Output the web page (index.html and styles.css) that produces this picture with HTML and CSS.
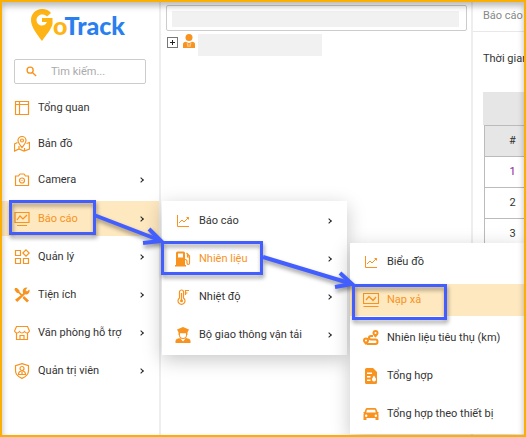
FILE: index.html
```
<!DOCTYPE html>
<html lang="vi">
<head>
<meta charset="utf-8">
<title>GoTrack</title>
<link rel="stylesheet" href="styles.css">
</head>
<body>
<div class="app">
  <aside class="sidebar">
    <a class="logo" href="#" aria-label="GoTrack">
      <svg class="logo-pin" viewBox="0 0 22 32" aria-hidden="true"><path fill="#fdb414" d="M11 0C4.500 0 0 5 0 11c0 7 6 14 11 21 4-6 9-11 10.500-17V9H11v4h5c-1 2.500-3 3.500-5 3.500-3.500 0-5.500-2.600-5.500-5.500s2.500-5.500 5.500-5.500c2 0 3.500.5 5 2l4-3.500C18 1.500 15 0 11 0z"/></svg>
      <span class="logo-text"><span class="logo-o">o</span>Track</span>
    </a>
    <label class="search">
      <svg class="search-icon" viewBox="0 0 12 12" aria-hidden="true"><circle cx="4.500" cy="4.500" r="3.300"/><path d="M7 7l4 4"/></svg>
      <input type="search" placeholder="Tìm kiếm..." aria-label="Tìm kiếm">
    </label>
    <nav>
      <ul class="menu pages">
        <li><a class="item" href="#"><svg class="icon" viewBox="0 0 16 16"><path d="M1.500 1.500h13v13h-13zM1.500 4.500h13M5.500 1.500v13"/></svg>Tổng quan</a></li>
        <li><a class="item" href="#"><svg class="icon" viewBox="0 0 16 16"><path d="M8 11.500C5.500 8.500 4 6.500 4 4.500a4 4 0 0 1 8 0c0 2-1.500 4-4 7zM3.500 6.500L.5 8v7l4.500-2 5 2 5.500-2V6.500l-3 1M5 10v3M10.500 12v3"/><circle cx="8" cy="4.500" r="1.500"/></svg>Bản đồ</a></li>
        <li><a class="item" href="#"><svg class="icon" viewBox="0 0 16 16"><path d="M1.500 4h3l1.500-2h4l1.500 2h3v9.500h-13z"/><circle cx="8" cy="8.500" r="2.500"/><path d="M7.500 8.500h1"/></svg>Camera<span class="chevron"></span></a></li>
      </ul>
      <ul class="menu groups">
        <li>
          <a class="item active" href="#"><svg class="icon" viewBox="0 0 16 16"><path d="M1 1.500h14v10H1zM3 9l3-4 3 3 4-4M3 14.500h10"/></svg>Báo cáo<span class="chevron"></span></a>
          <ul class="submenu reports">
            <li><a class="item" href="#"><svg class="icon thin" viewBox="0 0 16 16"><path d="M2.500 2v11.500H14M4 10l3-3 2 2 4.500-4.500M11.500 4.500h2v2"/></svg>Báo cáo<span class="chevron"></span></a></li>
            <li>
              <a class="item current" href="#"><svg class="icon" viewBox="0 0 16 16"><path class="solid" fill-rule="evenodd" d="M1 14V2Q1 .5 2.500.5h6Q10 .5 10 2v12h1v1.500H0V14zM3 2.500v4h5v-4z"/><path d="M10 8.500q2 0 2 2v1.500q0 1.500 1.200 1.500T14.500 12V5L11.500 2M12.500 3v3h2"/></svg>Nhiên liệu<span class="chevron"></span></a>
              <ul class="submenu fuel">
                <li><a class="item" href="#"><svg class="icon thin" viewBox="0 0 16 16"><path d="M2.500 2v11.500H14M4 10l3-3 2 2 4.500-4.500M11.500 4.500h2v2"/></svg>Biểu đồ</a></li>
                <li><a class="item active" href="#"><svg class="icon" viewBox="0 0 16 16"><path d="M.5 1.500h15v10H.5zM3 8l3-3.500 4 4 3-3.500M.5 14.500h15"/></svg>Nạp xả</a></li>
                <li><a class="item" href="#"><svg class="icon" viewBox="0 0 16 16"><path class="solid" fill-rule="evenodd" d="M12.500 0a3 3 0 0 1 3 3c0 1.500-1.500 3-3 4.500C11 6 9.500 4.500 9.500 3a3 3 0 0 1 3-3zm0 2a1 1 0 1 0 0 2 1 1 0 0 0 0-2zM3 7.500a3 3 0 0 1 3 3c0 1.500-1.500 3-3 4.500C1.500 13.500 0 12 0 10.500a3 3 0 0 1 3-3zm0 2a1 1 0 1 0 0 2 1 1 0 0 0 0-2z"/><path class="road" d="M10 6H8q-2 0-2 1.700T8 9.500h4.500q2 0 2 2.200t-2 2.300H4"/></svg>Nhiên liệu tiêu thụ (km)</a></li>
                <li><a class="item" href="#"><svg class="icon" viewBox="0 0 16 16"><path class="solid" fill-rule="evenodd" d="M3.500 0H10l4 4v10.500q0 1.500-1.500 1.500h-9Q2 16 2 14.500v-13Q2 0 3.500 0zM4 4.500V6h5V4.500zM4 8v1.500h3.500V8zM4 11.500V13h3.500v-1.500zM11 7.500c-1.300 2-2 3-2 4a2 2 0 0 0 4 0c0-1-.7-2-2-4z"/></svg>Tổng hợp</a></li>
                <li><a class="item" href="#"><svg class="icon" viewBox="0 0 16 16"><path class="solid" fill-rule="evenodd" d="M4 2h8q1 0 1.400 1L14.500 6h1v1.500h-.5l.5 1V14h-3v-2h-9v2h-3V8.500l.5-1H.5V6h1L2.600 3Q3 2 4 2zM4 3.700L3.200 6.500h9.600L12 3.700zM3.200 8.500a1.200 1.200 0 1 0 0 2.400 1.200 1.200 0 0 0 0-2.400zm9.600 0a1.200 1.200 0 1 0 0 2.400 1.200 1.200 0 0 0 0-2.400z"/></svg>Tổng hợp theo thiết bị</a></li>
              </ul>
            </li>
            <li><a class="item" href="#"><svg class="icon" viewBox="0 0 16 16"><path d="M4.500 9V3a2 2 0 0 1 4 0v6a3.500 3.500 0 1 1-4 0zM6.500 4v7M10.500 1.500h3.500M10.500 1v5M10.500 4h2"/><circle class="solid" cx="6.500" cy="11.800" r="1.500"/></svg>Nhiệt độ<span class="chevron"></span></a></li>
            <li><a class="item" href="#"><svg class="icon" viewBox="0 0 16 16"><path class="solid" fill-rule="evenodd" d="M8 0l6 2.500-1.500 2.700V8H12a4 4 0 0 1-8 0h-.5V5.200L2 2.500zM5 6.300V8a3 3 0 0 0 6 0V6.300zM5 11l3 3.500 3-3.500q4.500.5 4.500 3v2H.5v-2Q.5 11.500 5 11z"/></svg>Bộ giao thông vận tải<span class="chevron"></span></a></li>
          </ul>
        </li>
        <li><a class="item" href="#"><svg class="icon" viewBox="0 0 16 16"><path d="M1.500 1.500h5v5h-5zM1.500 9.500h5v5h-5zM9.500 9.500h5v5h-5zM12 .8L15.200 4 12 7.200 8.800 4z"/></svg>Quản lý<span class="chevron"></span></a></li>
        <li><a class="item" href="#"><svg class="icon" viewBox="0 0 16 16"><path class="solid" d="M1 1h2l2.500 2.500v1.300L8 7.300 6.800 8.500 4.300 6H3L.5 3zM9 6.500L8.800 4.500a3.500 3.500 0 0 1 4.700-3.800L11.500 3l1.500 1.500 2.300-2a3.500 3.500 0 0 1-4.300 4.700L3.300 15 1 12.800zM10 9l5 4.500-2 2L8.500 11z"/></svg>Tiện ích<span class="chevron"></span></a></li>
        <li><a class="item" href="#"><svg class="icon" viewBox="0 0 16 16"><path d="M2.500 1.500h11L15.500 6q-1 2-2.500 2t-2.500-1.500Q9.500 8 8 8T5.500 6.500Q4.500 8 3 8T.5 6zM2.500 8v6.500h11V8M6 14.500v-4h4v4"/></svg>Văn phòng hỗ trợ<span class="chevron"></span></a></li>
        <li><a class="item" href="#"><svg class="icon" viewBox="0 0 16 16"><path d="M8 .6l6.500 2v5.200q0 5-6.500 7.600Q1.500 12.800 1.500 7.800V2.600z"/><circle cx="8" cy="5.500" r="2"/><path d="M4.500 11.500q0-3.500 3.500-3.500t3.500 3.500zM8 9v2"/></svg>Quản trị viên<span class="chevron"></span></a></li>
      </ul>
    </nav>
  </aside>

  <section class="tree">
    <div class="filter"><div class="blank"></div></div>
    <div class="node">
      <button class="expand" type="button" aria-label="Mở rộng"></button>
      <svg class="person" viewBox="0 0 12 14" aria-hidden="true"><circle cx="6" cy="3.500" r="3.500"/><path d="M0 14v-3.500Q0 8 3 7.800l3 1.500 3-1.500q3 .2 3 2.700V14z"/><path class="tie" d="M4 8.500L5 13M8 8.500L7 13M6 10v3"/></svg>
      <div class="name"></div>
    </div>
  </section>

  <main class="report">
    <h1>Báo cáo</h1>
    <p class="period">Thời gian</p>
    <div class="grid-top"></div>
    <table>
      <thead><tr><th>#</th></tr></thead>
      <tbody><tr class="first"><td>1</td></tr><tr><td>2</td></tr><tr><td>3</td></tr><tr><td>4</td></tr><tr><td>5</td></tr></tbody>
    </table>
  </main>

  <svg class="callouts" viewBox="0 0 526 437" aria-hidden="true">
    <path d="M10.500 201.500h84v32h-84zM162.500 242.500h99v31h-99zM353.500 285.500h92v33h-92z"/>
    <path class="shaft" d="M94 215L159 240M263 257L349 283"/>
    <path class="head" d="M149 229L161 241L143 243M340 273L352 284L335 287"/>
  </svg>
</div>
</body>
</html>
```
FILE: styles.css
```
* { box-sizing: border-box; }
body {
  margin: 0;
  font: 11px/16px Roboto, "Noto Sans", sans-serif;
  color: #333;
  background: #fff;
}
ul { list-style: none; margin: 0; padding: 0; }
a { color: inherit; text-decoration: none; }

.app {
  position: relative;
  display: grid;
  grid-template-columns: 161px 1fr 53px;
  min-height: 100vh;
  overflow: hidden;
}
.app::after {
  content: "";
  position: absolute;
  inset: 0;
  z-index: 5;
  border: 2px solid #fcaf03;
  box-shadow: inset 0 4px 6px rgba(0, 0, 0, .28);
  pointer-events: none;
}

.sidebar {
  position: relative;
  z-index: 2;
  padding: 8px 0 0 2px;
  border-right: 2px solid #eee;
}
.logo {
  display: flex;
  align-items: center;
  height: 34px;
  margin-left: 29px;
}
.logo-pin { width: 22px; height: 32px; }
.logo-text { font: 900 25px/32px Lato, sans-serif; color: #2a7fee; }
.logo-o { color: #fdb414; }

.search {
  display: flex;
  align-items: center;
  height: 25px;
  margin: 17px 13px 6px 12px;
  padding: 0 11px;
  gap: 14px;
  border: 1px solid #ccc;
  border-radius: 2px;
}
.search-icon { flex: none; width: 11px; height: 11px; fill: none; stroke: #f7931e; stroke-width: 1.5; }
.search input {
  flex: 1;
  min-width: 0;
  padding: 0;
  border: 0;
  outline: 0;
  background: none;
  font: inherit;
}
.search input::placeholder { color: #aaa; opacity: 1; }

.menu { display: grid; }
.pages { gap: 1px; margin-bottom: 4px; }
.groups { gap: 3px; }
.item {
  display: flex;
  align-items: center;
  height: 35px;
  padding: 0 16px 0 12px;
  gap: 8px;
  white-space: nowrap;
}
.item.active { background: #fee8bf; color: #f7931e; }
.item.current { color: #f7931e; }
.icon {
  flex: none;
  width: 16px;
  height: 16px;
  fill: none;
  stroke: #f7931e;
  stroke-width: 1.2;
}
.icon.thin { stroke-width: 1; }
.icon .solid { fill: #f7931e; stroke: none; }
.icon .road { stroke-width: 2; }
.chevron {
  width: 4px;
  height: 4px;
  margin-left: auto;
  border: solid #222;
  border-width: 1px 1px 0 0;
  transform: rotate(45deg);
}

.submenu {
  position: absolute;
  background: #fff;
  box-shadow: 0 5px 18px rgba(0, 0, 0, .22);
}
.submenu .item { padding: 0 16px 0 13px; }
.reports { top: 201px; left: 162px; width: 185px; padding: 1px 0; }
.reports > li > .item { height: 38px; }
.submenu.fuel { top: 42px; left: 188px; width: 174px; display: grid; gap: 6px; padding: 3px 0 4px; }
.submenu.fuel .item { height: 32px; }

.tree { border-right: 2px solid #eee; padding: 5px 4px 0 5px; }
.filter { padding: 5px 7px 3px 5px; border: 1px solid #ccc; border-radius: 2px; }
.blank { height: 16px; background: #f1f1f1; }
.node { display: flex; align-items: flex-start; margin-top: 3px; padding-left: 1px; }
.expand {
  width: 11px;
  height: 11px;
  margin: 3px 5px 0 0;
  padding: 0;
  border: 1px solid #777;
  background: linear-gradient(#222, #222) center / 5px 1px no-repeat, linear-gradient(#222, #222) center / 1px 5px no-repeat, #fff;
}
.person { width: 12px; height: 14px; margin-right: 3px; fill: #f7931e; }
.person .tie { fill: none; stroke: #fde0c0; stroke-width: .7; }
.name { width: 124px; height: 22px; background: #f1f1f1; }

.report { overflow: hidden; min-width: 0; white-space: nowrap; }
.report h1 {
  margin: 0;
  padding: 8px 0 7px 10px;
  border-bottom: 1px solid #e8e8e8;
  font-size: 11px;
  font-weight: 400;
  color: #888;
}
.period { margin: 19px 0 25px 10px; }
.grid-top { height: 33px; margin-left: 10px; background: #e6e6e6; }
table { width: 57px; margin-left: 11px; border-collapse: collapse; text-align: center; }
th, td { height: 31px; padding: 0; border: 1px solid #bbb; font-weight: 400; }
th { background: #e6e6e6; }
.first { color: #8e1a9a; }

.callouts {
  position: absolute;
  top: 0;
  left: 0;
  z-index: 4;
  width: 526px;
  height: 437px;
  fill: none;
  stroke: #435eff;
  stroke-width: 3;
  filter: drop-shadow(1px 3px 2px rgba(0, 0, 0, .4));
  pointer-events: none;
}
.callouts .shaft { stroke-width: 4; }
.callouts .head { stroke-width: 4; }
```
